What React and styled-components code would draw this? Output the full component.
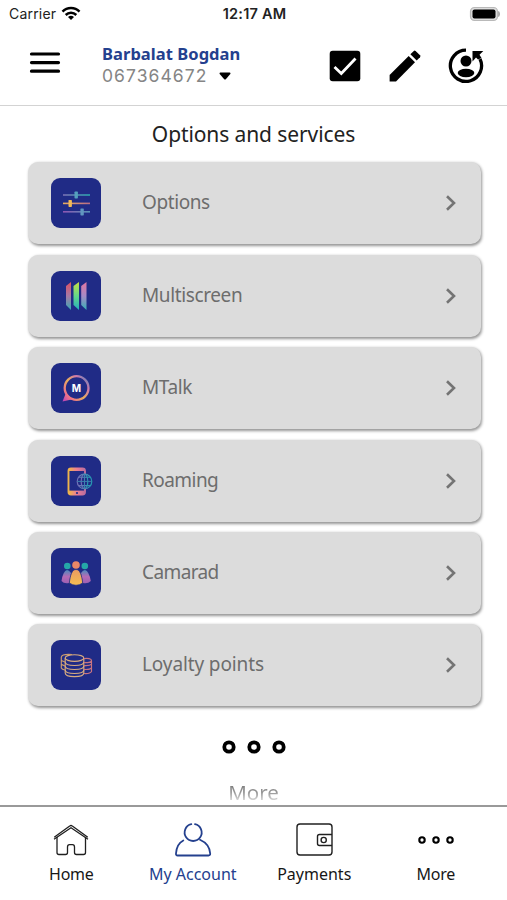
import React from "react";
import styled, { createGlobalStyle } from "styled-components";

const GlobalStyle = createGlobalStyle`
  * { box-sizing: border-box; }
  body { margin: 0; background: #fff; font-family: "Noto Sans", "Open Sans", sans-serif; }
  svg { display: block; flex: none; }
`;

const Screen = styled.div`
  width: 507px;
  height: 900px;
  display: flex;
  flex-direction: column;
  overflow: hidden;
  background: #fff;
`;

const StatusBar = styled.div`
  height: 28px;
  flex: none;
  display: grid;
  grid-template-columns: 1fr auto 1fr;
  align-items: center;
  padding: 0 6px 1px 9px;
  font-family: Inter, sans-serif;
  font-size: 14px;
  color: #222;
`;
const Carrier = styled.div`
  display: flex;
  align-items: center;
  gap: 5px;
  letter-spacing: 0.2px;
`;
const Clock = styled.div`
  font-weight: 600;
  font-size: 14.5px;
  letter-spacing: 0.2px;
  margin-right: 1px;
`;
const BatterySlot = styled.div`
  display: flex;
  justify-content: flex-end;
`;

const Header = styled.header`
  height: 78px;
  flex: none;
  display: flex;
  align-items: flex-start;
  border-bottom: 1px solid #d3d3d3;
  padding: 0 23px 0 29px;
`;
const MenuButton = styled.div`
  width: 73px;
  padding-top: 23px;
`;
const User = styled.div`
  width: 227px;
  padding-top: 14px;
`;
const UserName = styled.div`
  font-size: 16.5px;
  line-height: 23px;
  font-weight: 700;
  color: #24408e;
  white-space: nowrap;
  letter-spacing: 0.05px;
`;
const Phone = styled.div`
  display: flex;
  align-items: center;
  gap: 11.5px;
  font-family: Inter, sans-serif;
  font-size: 17.5px;
  line-height: 21px;
  color: #858585;
  letter-spacing: 1.05px;
`;
const Actions = styled.div`
  flex: 1;
  display: flex;
  justify-content: space-between;
  align-items: center;
  padding-top: 20px;
`;

const Main = styled.main`
  flex: 1;
  min-height: 0;
  overflow: hidden;
  display: flex;
  flex-direction: column;
  align-items: center;
`;
const Title = styled.h1`
  flex: none;
  margin: 0;
  height: 56px;
  padding-top: 14px;
  font-size: 21px;
  line-height: 28px;
  font-weight: 400;
  letter-spacing: -0.1px;
  color: #222;
`;
const CardList = styled.div`
  width: 453px;
  flex: none;
  margin: 0.4px 0 0 1px;
  display: flex;
  flex-direction: column;
  gap: 10.4px;
`;
const Card = styled.div`
  height: 82px;
  display: flex;
  align-items: center;
  padding: 0 25px 0 23.5px;
  border-radius: 10px;
  background: #dcdcdc;
  box-shadow: 1px 1.5px 3px rgba(0, 0, 0, 0.42);
`;
const Tile = styled.div`
  width: 50px;
  height: 50px;
  flex: none;
  border-radius: 9px;
  background: #202b86;
`;
const CardLabel = styled.div`
  flex: 1;
  margin-left: 41px;
  font-size: 19px;
  line-height: 26px;
  padding-bottom: 2px;
  color: #6d6d6d;
  letter-spacing: ${(p) => p.$spacing || 0}px;
`;
const MoreSection = styled.div`
  flex: none;
  display: flex;
  flex-direction: column;
  align-items: center;
  padding-top: 34px;
`;
const MoreText = styled.div`
  margin-top: 24px;
  height: 29px;
  font-size: 20.5px;
  line-height: 29px;
  color: transparent;
  background: linear-gradient(#777 20%, #999 50%, #e6e6e6 84%);
  background-clip: text;
`;

const TabBar = styled.nav`
  height: 95px;
  flex: none;
  border-top: 2px solid #999;
  display: grid;
  grid-template-columns: repeat(4, 121.5px);
  justify-content: center;
`;
const Tab = styled.div`
  display: flex;
  flex-direction: column;
  align-items: center;
  padding-top: 15px;
  color: ${(p) => (p.$active ? "#24408e" : "#171717")};
`;
const TabLabel = styled.div`
  margin-top: 4px;
  font-size: 16px;
  line-height: 24px;
  white-space: nowrap;
  letter-spacing: ${(p) => p.$spacing || 0}px;
`;

const Wifi = () => (
  <svg width="20" height="15" viewBox="0 0 20 15" fill="none" stroke="#000" strokeWidth="2.5">
    <path d="M1.5 5.7C6.2 .8 13.8.8 18.5 5.7" />
    <path d="M4.7 9C7.7 6 12.3 6 15.3 9" />
    <path d="M7 11.1Q10 8.5 13 11.1L10 14Z" fill="#000" stroke="none" />
  </svg>
);

const Battery = () => (
  <svg width="32" height="16" viewBox="0 0 32 16">
    <rect x="1.5" y="1.5" width="27" height="13" rx="4" fill="#ddd" stroke="#b9b9b9" strokeWidth="1.2" />
    <rect x="3.5" y="3.5" width="23" height="9" rx="2" fill="#000" />
    <path d="M29.7 5.5Q31.3 8 29.7 10.5Z" fill="#a5a5a5" stroke="#a5a5a5" />
  </svg>
);

const Hamburger = () => (
  <svg width="32" height="24" viewBox="0 0 32 24" stroke="#000" strokeWidth="3.2" strokeLinecap="round">
    <path d="M2.5 3H29.5M2.5 11.6H29.5M2.5 20.2H29.5" />
  </svg>
);

const Caret = () => (
  <svg width="12" height="8" viewBox="0 0 12 8">
    <path d="M1.3.5H10.7Q12 .5 11.3 2L7 7Q6 8 5 7L.7 2Q0 .5 1.3.5Z" />
  </svg>
);

const CheckBox = () => (
  <svg width="32" height="32" viewBox="0 0 32 32">
    <rect x=".7" y=".7" width="30.6" height="30.6" rx="3" />
    <path d="M5.5 17L12.3 23.5L26.5 8.5" fill="none" stroke="#fff" strokeWidth="2.8" />
  </svg>
);

const Pencil = () => (
  <svg width="32" height="32" viewBox="0 0 32 32">
    <path d="M.6 25L19.7 6L26 12.3L7 31.4H.6Z" />
    <path d="M21.4 4.3L24.8.9Q25.7.2 26.6.9L31 5.3Q31.8 6.2 31 7.2L27.7 10.5Z" />
  </svg>
);

const Switcher = () => (
  <svg width="36" height="36" viewBox="0 0 36 36">
    <path d="M18 2.2A15.6 15.6 0 1 0 32 11" fill="none" stroke="#000" strokeWidth="3.3" />
    <circle cx="18" cy="13" r="5.5" />
    <ellipse cx="18" cy="25" rx="8.3" ry="4.2" />
    <path d="M24.5 3H35.3L31.5 6.8L33.5 10L30 11.5L28 9.5L24.5 13.5Z" />
  </svg>
);

const Chevron = () => (
  <svg width="10" height="16" viewBox="0 0 10 16" fill="none" stroke="#747474" strokeWidth="2.6">
    <path d="M1 1.2L8 8L1 14.8" />
  </svg>
);

const Gradient = ({ id, stops, vertical }) => (
  <linearGradient id={id} x1="0" y1="0" x2={vertical ? 0 : 1} y2={vertical ? 1 : 0}>
    {stops.map((color, i) => (
      <stop key={i} offset={i / (stops.length - 1)} stopColor={color} />
    ))}
  </linearGradient>
);

const OptionsIcon = () => (
  <svg width="50" height="50" viewBox="0 0 50 50">
    <defs>
      <Gradient id="oa" stops={["#7a6eb3", "#2ba5ad"]} />
      <Gradient id="ob" stops={["#e8ac60", "#b66c88"]} />
      <Gradient id="oc" stops={["#8f55b2", "#5793b7"]} />
    </defs>
    <rect x="12" y="16.2" width="27" height="1.6" fill="url(#oa)" />
    <rect x="23.5" y="13.5" width="3.4" height="7" rx=".7" fill="#549fbd" />
    <rect x="12" y="24.6" width="27" height="1.6" fill="url(#ob)" />
    <rect x="17.5" y="21.9" width="3.4" height="7" rx=".7" fill="#f1b957" />
    <rect x="12" y="33" width="27" height="1.6" fill="url(#oc)" />
    <rect x="29.4" y="30.4" width="3.4" height="7" rx=".7" fill="#6096c0" />
  </svg>
);

const MultiscreenIcon = () => (
  <svg width="50" height="50" viewBox="0 0 50 50">
    <defs>
      <Gradient id="ma" vertical stops={["#dc5063", "#a579a6", "#38a8b5"]} />
      <Gradient id="mb" vertical stops={["#c6df45", "#63d88a", "#23adc0"]} />
      <Gradient id="mc" vertical stops={["#e575a0", "#a58bc7", "#35b0b5"]} />
    </defs>
    <path d="M20 11L15 15V34L20 39Z" fill="url(#ma)" />
    <path d="M28 11L22.5 15V34L28 39Z" fill="url(#mb)" />
    <path d="M35.5 11L30.2 15V34L35.5 39Z" fill="url(#mc)" />
  </svg>
);

const TalkLetter = styled.text`
  font: 700 10px Inter, sans-serif;
  fill: #fff;
`;
const TalkIcon = () => (
  <svg width="50" height="50" viewBox="0 0 50 50">
    <defs>
      <linearGradient id="ta" gradientUnits="userSpaceOnUse" x1="12" y1="38" x2="38" y2="14">
        <stop offset="0" stopColor="#ba43ba" />
        <stop offset=".2" stopColor="#ed7288" />
        <stop offset=".5" stopColor="#e7ae5c" />
        <stop offset=".75" stopColor="#d178a9" />
        <stop offset="1" stopColor="#4b86bd" />
      </linearGradient>
    </defs>
    <circle cx="25.6" cy="25" r="11.9" fill="none" stroke="url(#ta)" strokeWidth="2.3" />
    <path d="M14.5 31L11.5 38.5L20.5 36.5Z" fill="url(#ta)" />
    <TalkLetter x="25.4" y="29" textAnchor="middle">M</TalkLetter>
  </svg>
);

const RoamingIcon = () => (
  <svg width="50" height="50" viewBox="0 0 50 50" fill="none">
    <defs>
      <Gradient id="ra" stops={["#eeb44b", "#ed7f93", "#bd6e9e"]} />
      <Gradient id="rb" stops={["#756fb5", "#219bb1"]} />
    </defs>
    <path d="M34 18V15Q34 12.5 31.5 12.5H20Q17.5 12.5 17.5 15V36Q17.5 38.5 20 38.5H31.5Q34 38.5 34 36V33" stroke="url(#ra)" strokeWidth="1.9" />
    <rect x="18" y="12.5" width="15.5" height="2.5" fill="url(#ra)" />
    <rect x="18" y="34.6" width="15.5" height="4" fill="url(#ra)" />
    <circle cx="26" cy="37" r="1.1" fill="#202b86" />
    <g stroke="url(#rb)" strokeWidth="1.15">
      <circle cx="33.5" cy="25.4" r="7.3" />
      <ellipse cx="33.5" cy="25.4" rx="3.3" ry="7.3" />
      <path d="M27.8 21.2H39.2M27.8 29.6H39.2" />
    </g>
    <path d="M33.5 18V33M26.2 25.4H40.8" stroke="#3d82b0" />
  </svg>
);

const CamaradIcon = () => (
  <svg width="50" height="50" viewBox="0 0 50 50">
    <defs>
      <Gradient id="ca" vertical stops={["#4c8abc", "#b56bb5", "#9d60b3"]} />
      <Gradient id="cb" vertical stops={["#eb9b62", "#f5bd52"]} />
    </defs>
    <circle cx="16.3" cy="18" r="3.3" fill="#25a8a8" />
    <circle cx="33.8" cy="18" r="3.3" fill="#25a8a8" />
    <path d="M16 22Q12 23 10.5 33Q13 36 18 35L20 25Q18 22 16 22Z" fill="url(#ca)" />
    <path d="M34 22Q38 23 39.8 33Q37 36 32 35L30 25Q32 22 34 22Z" fill="url(#ca)" />
    <circle cx="25" cy="17" r="3.8" fill="#e98767" />
    <path d="M25 21.5C21 21.5 19.3 27 18.3 35Q25 39.5 31.7 35C30.7 27 29 21.5 25 21.5Z" fill="url(#cb)" stroke="#202b86" strokeWidth=".7" />
  </svg>
);

const LoyaltyIcon = () => (
  <svg width="50" height="50" viewBox="0 0 50 50" fill="none" stroke="#d8ac80" strokeWidth="1.15">
    <ellipse cx="23.5" cy="18" rx="9.3" ry="3.3" />
    <path d="M14.2 18V33C14.2 37.8 32.8 37.8 32.8 33V18" />
    <path d="M14.2 22C14.2 26.6 32.8 26.6 32.8 22M14.2 26C14.2 30.6 32.8 30.6 32.8 26M14.2 30C14.2 34.6 32.8 34.6 32.8 30" />
    <path d="M21 14.5Q11 13.7 10.3 17V28Q11 29.4 14 30M10.3 20.5L14 22M10.3 24.4L14 26" stroke="#cc9d6f" />
    <path d="M33 18.6C36.5 17.8 40.5 18.8 40.5 20.5S36 23 33 22.5M40.5 20.5V31.5Q39 34 33 33.5M40.5 24Q39 26 33 25.6M40.5 27.8Q39 29.8 33 29.4" stroke="#ca7580" />
  </svg>
);

const RingDots = ({ width, height, radius, stroke, pitch }) => (
  <svg width={width} height={height} viewBox={`0 0 ${width} ${height}`} fill="#fff" stroke="#000" strokeWidth={stroke}>
    {[-1, 0, 1].map((n) => (
      <circle key={n} cx={width / 2 + n * pitch} cy={height / 2} r={radius} />
    ))}
  </svg>
);

const HomeIcon = () => (
  <svg width="38" height="36" viewBox="0 0 38 36" fill="none" stroke="#202020" strokeWidth="1.3">
    <path d="M2 17.2L19 5.8L36 17.2M2.2 15.3L17.7 4Q19 3 20.3 4L35.8 15.3" />
    <path d="M5 15V30.5Q5 32.5 7 32.5H13.5Q15.5 32.5 15.5 30.5V25Q15.5 22.7 17.5 22.7H20.5Q22.5 22.7 22.5 25V30.5Q22.5 32.5 24.5 32.5H31.5Q33.5 32.5 33.5 30.5V15" />
  </svg>
);

const AccountIcon = () => (
  <svg width="38" height="36" viewBox="0 0 38 36" fill="none" stroke="#24408e" strokeWidth="1.8" strokeLinecap="round">
    <path d="M17.3 2.2A8.5 8.5 0 1 0 21 2.2" />
    <path d="M26 17.8Q35.5 22 36.2 31.5Q36.3 33.5 34.5 33.5H3.6Q1.8 33.5 2 31.5Q2.6 22 9.3 18.5" />
  </svg>
);

const WalletIcon = () => (
  <svg width="38" height="36" viewBox="0 0 38 36" fill="none" stroke="#202020" strokeWidth="1.4">
    <rect x="2" y="2" width="35" height="31" rx="3" />
    <path d="M37 12.5H24.5Q22.5 12.5 22.5 14.5V21.5Q22.5 23.5 24.5 23.5H37" />
    <circle cx="28.7" cy="18" r="2.6" />
  </svg>
);

const services = [
  { label: "Options", Icon: OptionsIcon, spacing: -0.4 },
  { label: "Multiscreen", Icon: MultiscreenIcon, spacing: -0.38 },
  { label: "MTalk", Icon: TalkIcon, spacing: -0.4 },
  { label: "Roaming", Icon: RoamingIcon, spacing: -0.55 },
  { label: "Camarad", Icon: CamaradIcon, spacing: -0.6 },
  { label: "Loyalty points", Icon: LoyaltyIcon, spacing: -0.12 },
];

export default function App() {
  return (
    <Screen>
      <GlobalStyle />
      <StatusBar>
        <Carrier>Carrier<Wifi /></Carrier>
        <Clock>12:17 AM</Clock>
        <BatterySlot><Battery /></BatterySlot>
      </StatusBar>
      <Header>
        <MenuButton><Hamburger /></MenuButton>
        <User>
          <UserName>Barbalat Bogdan</UserName>
          <Phone>067364672<Caret /></Phone>
        </User>
        <Actions><CheckBox /><Pencil /><Switcher /></Actions>
      </Header>
      <Main>
        <Title>Options and services</Title>
        <CardList>
          {services.map(({ label, Icon, spacing }) => (
            <Card key={label}>
              <Tile><Icon /></Tile>
              <CardLabel $spacing={spacing}>{label}</CardLabel>
              <Chevron />
            </Card>
          ))}
        </CardList>
        <MoreSection>
          <RingDots width={66} height={14} radius={4.7} stroke={3.8} pitch={25} />
          <MoreText>More</MoreText>
        </MoreSection>
      </Main>
      <TabBar>
        <Tab><HomeIcon /><TabLabel $spacing={-0.3}>Home</TabLabel></Tab>
        <Tab $active><AccountIcon /><TabLabel>My Account</TabLabel></Tab>
        <Tab><WalletIcon /><TabLabel>Payments</TabLabel></Tab>
        <Tab>
          <RingDots width={38} height={36} radius={2.7} stroke={2.1} pitch={14} />
          <TabLabel $spacing={-0.3}>More</TabLabel>
        </Tab>
      </TabBar>
    </Screen>
  );
}
